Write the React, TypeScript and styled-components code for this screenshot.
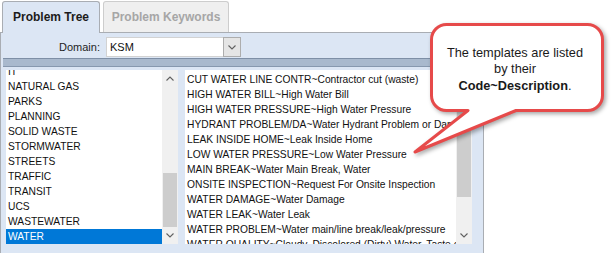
import React from "react";
import styled, { createGlobalStyle } from "styled-components";

const GlobalStyle = createGlobalStyle`
  body {
    margin: 0;
    background: #ffffff;
    font-family: "Liberation Sans", Arial, sans-serif;
  }
`;

const PANEL_BG = "#dce6f4";
const LIST_FONT = "10.25px";

const Page = styled.div`
  position: relative;
  width: 611px;
  height: 253px;
  overflow: hidden;
  background: #ffffff;
`;

const TabStrip = styled.div`
  display: flex;
  align-items: flex-end;
  gap: 3px;
  height: 32px;
  padding-left: 2px;
`;

const Tab = styled.div<{ $active?: boolean; $width: number }>`
  display: flex;
  align-items: center;
  justify-content: center;
  box-sizing: border-box;
  width: ${(p) => p.$width}px;
  height: ${(p) => (p.$active ? 32 : 31)}px;
  margin-bottom: ${(p) => (p.$active ? -1 : 0)}px;
  position: relative;
  z-index: ${(p) => (p.$active ? 1 : 0)};
  padding-bottom: 1px;
  border: 1px solid ${(p) => (p.$active ? "#a9adb3" : "#cdcdcd")};
  border-bottom: none;
  border-radius: 3px 3px 0 0;
  background: ${(p) => (p.$active ? PANEL_BG : "#efefef")};
  color: ${(p) => (p.$active ? "#1c1c1c" : "#a6a6a6")};
  font-size: 12px;
  font-weight: bold;
`;

const Panel = styled.div`
  box-sizing: border-box;
  width: 484px;
  height: 221px;
  background: ${PANEL_BG};
  border: 1px solid #a9adb3;
  border-bottom: none;
`;

const DomainRow = styled.div`
  display: flex;
  align-items: center;
  gap: 6px;
  padding-top: 4px;
  height: 20px;
`;

const DomainLabel = styled.div`
  width: 99px;
  text-align: right;
  font-size: 11px;
  color: #1e1e1e;
`;

const Select = styled.div`
  box-sizing: border-box;
  display: flex;
  width: 135px;
  height: 20px;
  background: #ffffff;
  border: 1px solid #d2d2d2;
`;

const SelectValue = styled.div`
  flex: 1;
  padding-left: 3px;
  font-size: 11px;
  line-height: 18px;
  color: #111111;
`;

const SelectButton = styled.div`
  box-sizing: border-box;
  display: flex;
  align-items: center;
  justify-content: center;
  width: 18px;
  margin: -1px -1px -1px 0;
  background: #e5e5e5;
  border: 1px solid #adadad;
`;

const SplitterBar = styled.div`
  box-sizing: border-box;
  height: 9px;
  margin: 1px 0 0 2px;
  background: #a9b9cd;
  border-top: 1px solid #7e8fa6;
  border-bottom: 1px solid #8798ae;
`;

const Lists = styled.div`
  display: flex;
  gap: 7px;
  padding: 3px 0 0 5px;
`;

const ListBox = styled.div<{ $width: number }>`
  display: flex;
  width: ${(p) => p.$width}px;
  height: 174px;
  background: #ffffff;
`;

const ListBody = styled.div<{ $offset: number }>`
  flex: 1;
  overflow: hidden;
  padding-top: ${(p) => Math.max(p.$offset, 0)}px;

  & > :first-child {
    margin-top: ${(p) => Math.min(p.$offset, 0)}px;
  }
`;

const ListRow = styled.div<{ $selected?: boolean }>`
  height: 15px;
  padding-left: 2px;
  font-size: ${LIST_FONT};
  line-height: 15px;
  white-space: nowrap;
  color: ${(p) => (p.$selected ? "#ffffff" : "#111111")};
  background: ${(p) => (p.$selected ? "#0078d7" : "transparent")};
`;

const ScrollTrack = styled.div`
  display: flex;
  flex-direction: column;
  width: 16px;
  background: #f0f0f0;
`;

const ScrollArrow = styled.div`
  display: flex;
  align-items: center;
  justify-content: center;
  height: 17px;
`;

const ScrollRail = styled.div`
  flex: 1;
  padding: 0 1px;
`;

const ScrollThumb = styled.div<{ $top: number; $height: number }>`
  margin-top: ${(p) => p.$top}px;
  height: ${(p) => p.$height}px;
  background: #cdcdcd;
`;

const Callout = styled.div`
  position: absolute;
  left: 430px;
  top: 23px;
  width: 174px;
  height: 89px;
  display: flex;
  align-items: center;
  justify-content: center;
  box-sizing: border-box;
  padding: 4px 4px 0 0;
`;

const CalloutShape = styled.svg`
  position: absolute;
  left: 0;
  top: 0;
  overflow: visible;
  filter: drop-shadow(2px 2px 2px rgba(0, 0, 0, 0.35));
`;

const CalloutText = styled.div`
  position: relative;
  text-align: center;
  font-size: 12.75px;
  line-height: 16.5px;
  color: #1a1a1a;

  b {
    font-weight: bold;
  }
`;

const Chevron = ({ up }: { up?: boolean }) => (
  <svg width="8" height="5" viewBox="0 0 8 5">
    <polyline
      points={up ? "0.5,4.5 4,1 7.5,4.5" : "0.5,0.5 4,4 7.5,0.5"}
      fill="none"
      stroke="#606060"
      strokeWidth="1.1"
    />
  </svg>
);

type ScrollbarProps = { thumbTop: number; thumbHeight: number };

const Scrollbar = ({ thumbTop, thumbHeight }: ScrollbarProps) => (
  <ScrollTrack>
    <ScrollArrow>
      <Chevron up />
    </ScrollArrow>
    <ScrollRail>
      <ScrollThumb $top={thumbTop} $height={thumbHeight} />
    </ScrollRail>
    <ScrollArrow>
      <Chevron />
    </ScrollArrow>
  </ScrollTrack>
);

const categories = [
  "IT",
  "NATURAL GAS",
  "PARKS",
  "PLANNING",
  "SOLID WASTE",
  "STORMWATER",
  "STREETS",
  "TRAFFIC",
  "TRANSIT",
  "UCS",
  "WASTEWATER",
  "WATER",
];

const templates = [
  "CUT WATER LINE CONTR~Contractor cut (waste)",
  "HIGH WATER BILL~High Water Bill",
  "HIGH WATER PRESSURE~High Water Pressure",
  "HYDRANT PROBLEM/DA~Water Hydrant Problem or Damage",
  "LEAK INSIDE HOME~Leak Inside Home",
  "LOW WATER PRESSURE~Low Water Pressure",
  "MAIN BREAK~Water Main Break, Water",
  "ONSITE INSPECTION~Request For Onsite Inspection",
  "WATER DAMAGE~Water Damage",
  "WATER LEAK~Water Leak",
  "WATER PROBLEM~Water main/line break/leak/pressure",
  "WATER QUALITY~Cloudy, Discolored (Dirty) Water, Taste or Odor",
];

// bubble outline with the pointer tail running down-left to the list
const bubblePath =
  "M 16.5 1.5 H 157.5 A 15 15 0 0 1 172.5 16.5 V 72.5 A 15 15 0 0 1 157.5 87.5 " +
  "H 86 L -15 129 L 38 87.5 H 16.5 A 15 15 0 0 1 1.5 72.5 V 16.5 A 15 15 0 0 1 16.5 1.5 Z";

export default function App() {
  const selected = "WATER";

  return (
    <Page>
      <GlobalStyle />
      <TabStrip>
        <Tab $active $width={98}>
          Problem Tree
        </Tab>
        <Tab $width={126}>Problem Keywords</Tab>
      </TabStrip>
      <Panel>
        <DomainRow>
          <DomainLabel>Domain:</DomainLabel>
          <Select>
            <SelectValue>KSM</SelectValue>
            <SelectButton>
              <Chevron />
            </SelectButton>
          </Select>
        </DomainRow>
        <SplitterBar />
        <Lists>
          <ListBox $width={172}>
            <ListBody $offset={-6}>
              {categories.map((name) => (
                <ListRow key={name} $selected={name === selected}>
                  {name}
                </ListRow>
              ))}
            </ListBody>
            <Scrollbar thumbTop={86} thumbHeight={54} />
          </ListBox>
          <ListBox $width={287}>
            <ListBody $offset={2}>
              {templates.map((t) => (
                <ListRow key={t}>{t}</ListRow>
              ))}
            </ListBody>
            <Scrollbar thumbTop={0} thumbHeight={110} />
          </ListBox>
        </Lists>
      </Panel>
      <Callout>
        <CalloutShape width="174" height="89">
          <path
            d={bubblePath}
            fill="#ffffff"
            stroke="#e64a4a"
            strokeWidth="3"
            strokeLinejoin="round"
          />
        </CalloutShape>
        <CalloutText>
          The templates are listed
          <br />
          by their
          <br />
          <b>Code~Description</b>.
        </CalloutText>
      </Callout>
    </Page>
  );
}
